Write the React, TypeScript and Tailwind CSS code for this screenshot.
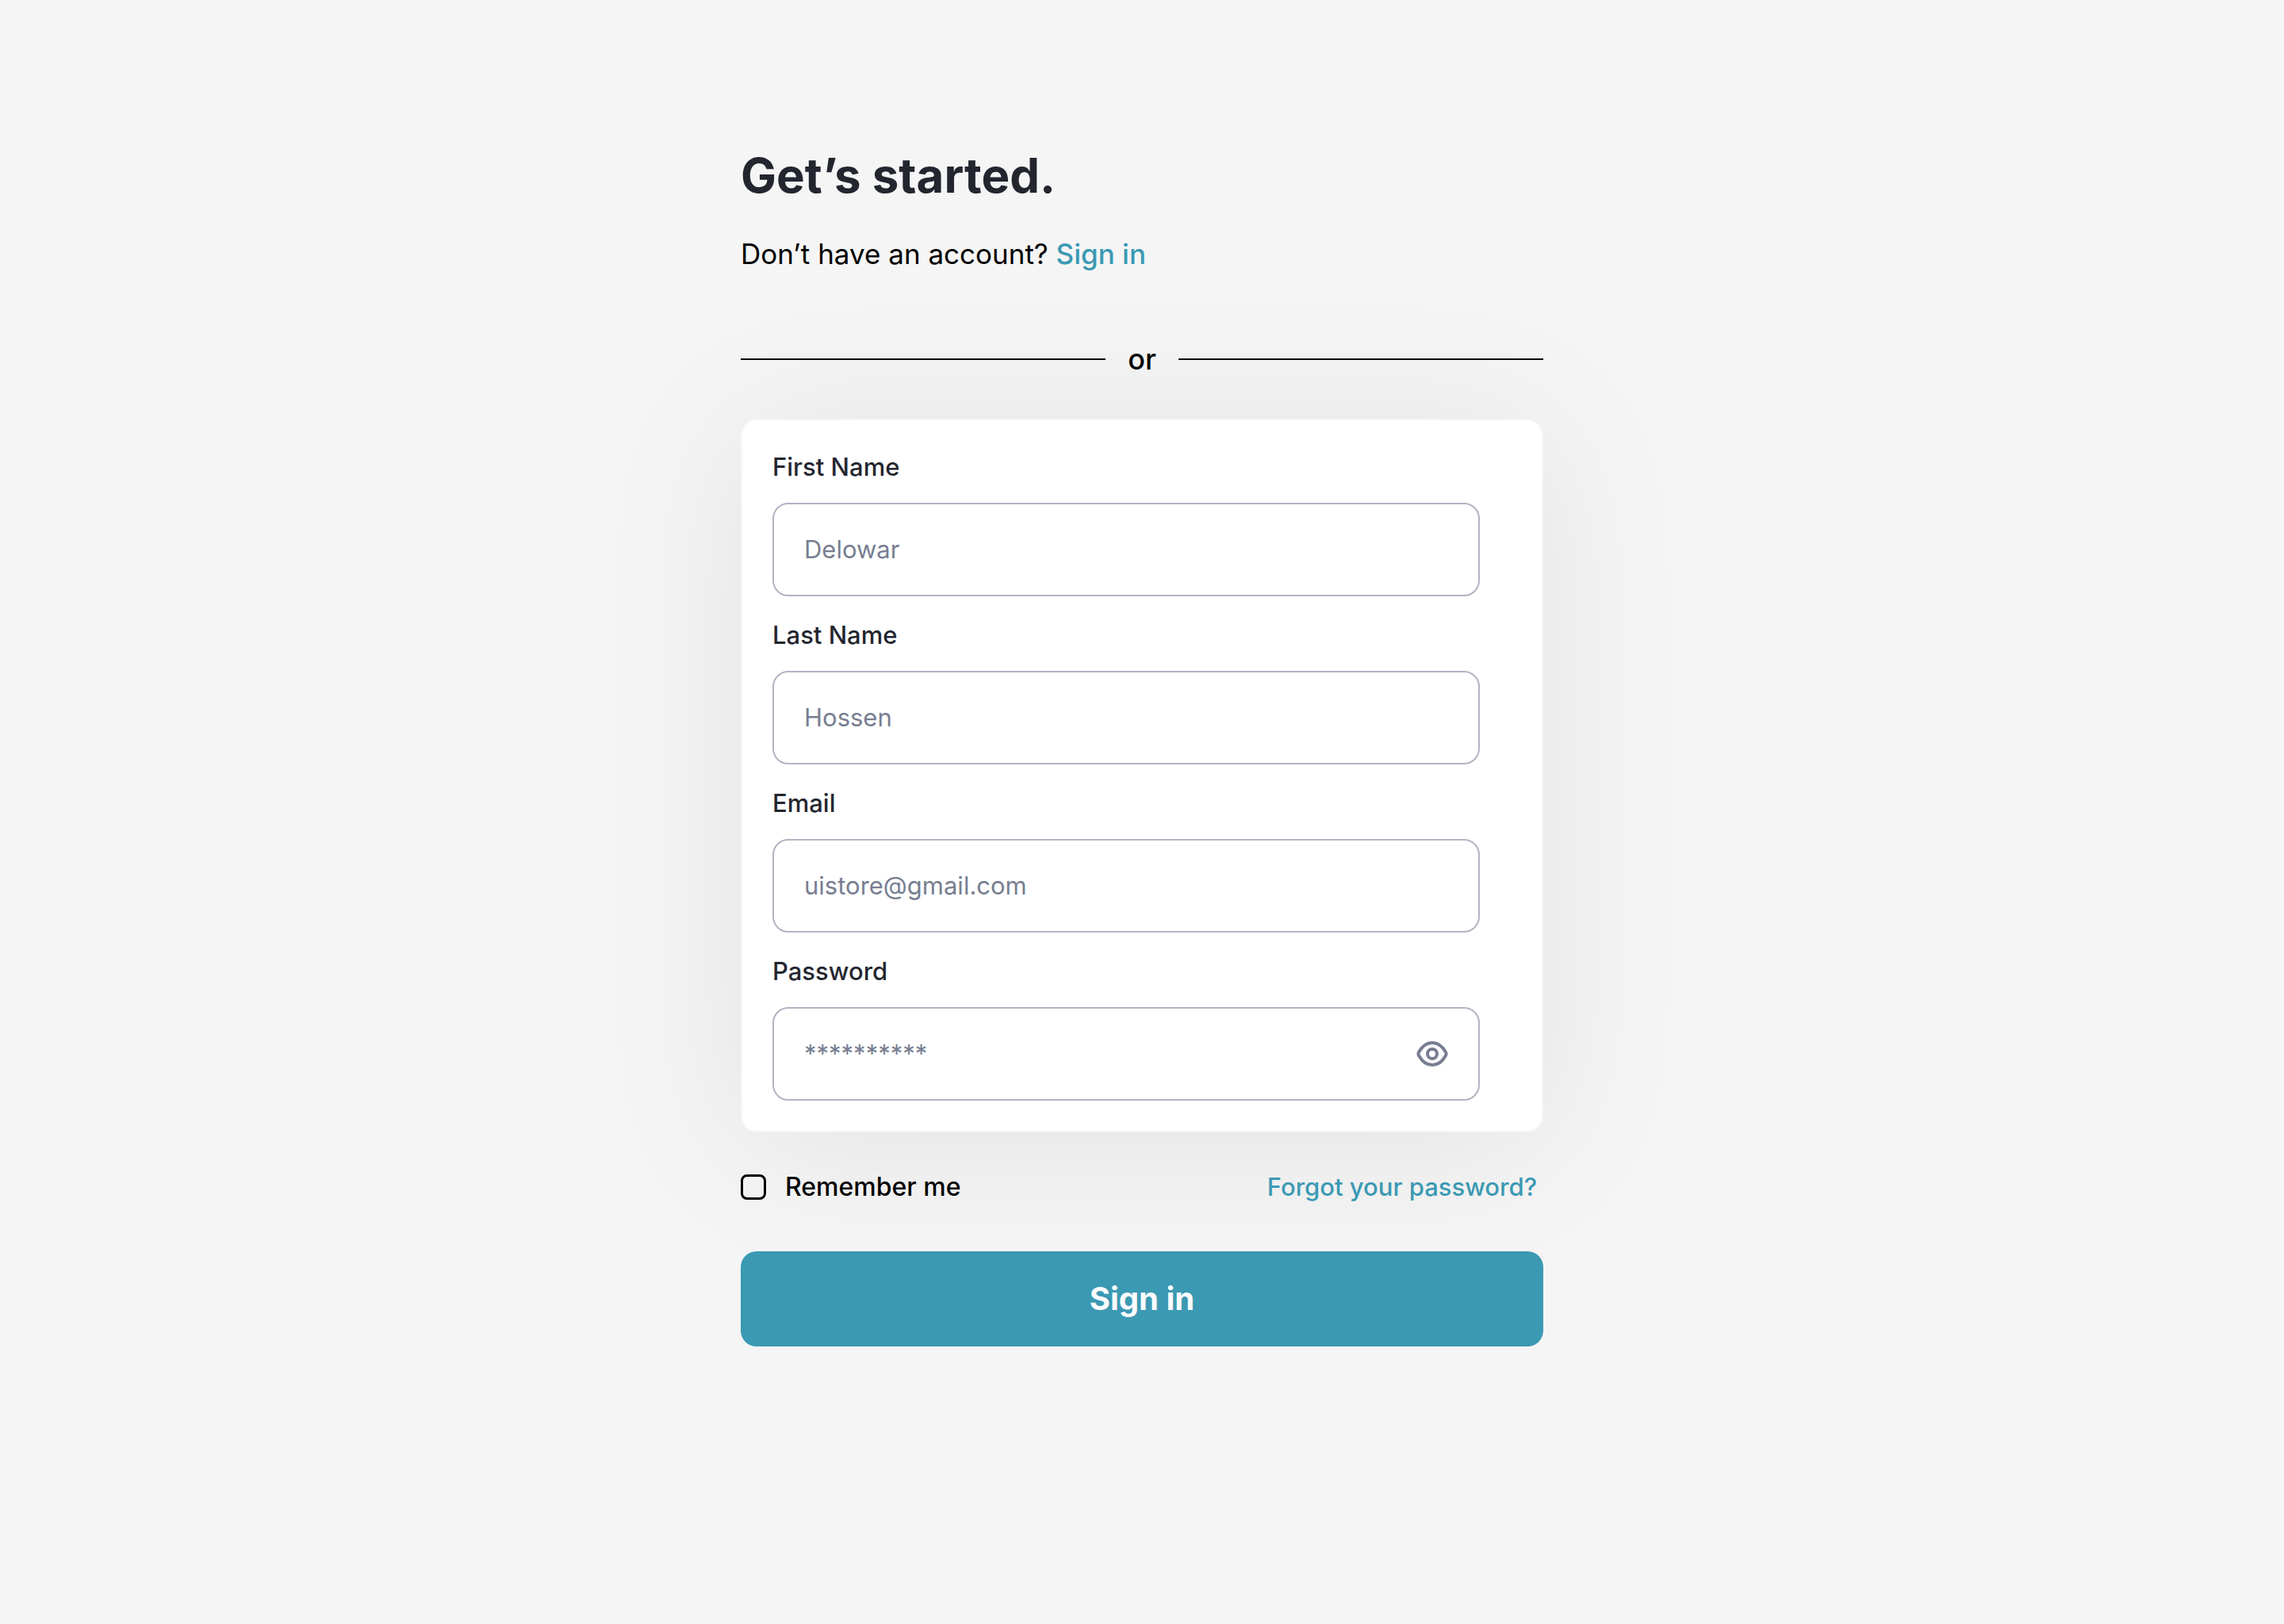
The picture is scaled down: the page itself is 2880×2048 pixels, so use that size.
import { useState } from "react";

type FieldProps = {
  id: string;
  label: string;
  type: string;
  placeholder: string;
  children?: React.ReactNode;
};

function Field({ id, label, type, placeholder, children }: FieldProps) {
  return (
    <div className="flex flex-col gap-6">
      <label htmlFor={id} className="text-[31px] leading-[42px] font-medium text-[#23262f]">
        {label}
      </label>
      <div className="flex h-[118px] items-center gap-4 rounded-[20px] border-2 border-[#b1b5c3] pr-[34px] pl-[38px]">
        <input
          id={id}
          type={type}
          placeholder={placeholder}
          className="min-w-0 flex-1 bg-transparent text-[31px] leading-[42px] text-[#23262f] outline-none placeholder:text-[#777e91]"
        />
        {children}
      </div>
    </div>
  );
}

function EyeIcon() {
  return (
    <svg viewBox="0 0 48 48" className="size-12" fill="none" stroke="currentColor" strokeWidth="4" aria-hidden="true">
      <path
        d="M6.800 22.300C9.600 17.200 15.400 10 24 10s14.400 7.200 17.200 12.300c.65 1.200.65 2.200 0 3.400C38.400 30.800 32.600 38 24 38S9.600 30.800 6.800 25.700c-.65-1.200-.65-2.200 0-3.400Z"
        strokeLinejoin="round"
      />
      <circle cx="24" cy="24" r="6" />
    </svg>
  );
}

export default function App() {
  const [visible, setVisible] = useState(false);

  return (
    <main className="flex min-h-screen justify-center bg-[#f5f5f5] px-6 pt-[182px] pb-24 font-['Inter',sans-serif] text-black">
      <div className="w-full max-w-[1012px]">
        <h1 className="text-[60px] leading-[78px] font-bold text-[#23262f]">Get’s started.</h1>
        <p className="mt-9 text-[35px] leading-[48px]">
          Don’t have an account?{" "}
          <a href="#signin" className="font-medium text-[#3b99b3]">
            Sign in
          </a>
        </p>

        <div className="mt-[85px] flex items-center gap-7">
          <span className="h-0.5 flex-1 bg-black" />
          <span className="text-[36px] leading-[48px] font-medium">or</span>
          <span className="h-0.5 flex-1 bg-black" />
        </div>

        <form onSubmit={(e) => e.preventDefault()}>
          <div className="mt-[51px] flex flex-col gap-7 rounded-[20px] border-2 border-[#f5f5f5] bg-white py-[38px] pr-[78px] pl-[38px] shadow-[0_16px_200px_rgba(0,0,0,0.08)]">
            <Field id="first-name" label="First Name" type="text" placeholder="Delowar" />
            <Field id="last-name" label="Last Name" type="text" placeholder="Hossen" />
            <Field id="email" label="Email" type="email" placeholder="uistore@gmail.com" />
            <Field id="password" label="Password" type={visible ? "text" : "password"} placeholder="**********">
              <button
                type="button"
                aria-label="Show password"
                onClick={() => setVisible(!visible)}
                className="text-[#777e91]"
              >
                <EyeIcon />
              </button>
            </Field>
          </div>

          <div className="mt-12 flex items-center justify-between pr-2 leading-[42px] font-medium">
            <div className="flex items-center gap-6">
              <input
                id="remember"
                type="checkbox"
                className="size-8 appearance-none rounded-lg border-3 border-black checked:bg-black"
              />
              <label htmlFor="remember" className="text-[32px]">
                Remember me
              </label>
            </div>
            <a href="#forgot" className="text-[31px] text-[#3b99b3]">
              Forgot your password?
            </a>
          </div>

          <button
            type="submit"
            className="mt-[60px] h-[120px] w-full rounded-[20px] bg-[#3b99b3] text-[40px] leading-[48px] font-bold text-[#fcfcfd]"
          >
            Sign in
          </button>
        </form>
      </div>
    </main>
  );
}
